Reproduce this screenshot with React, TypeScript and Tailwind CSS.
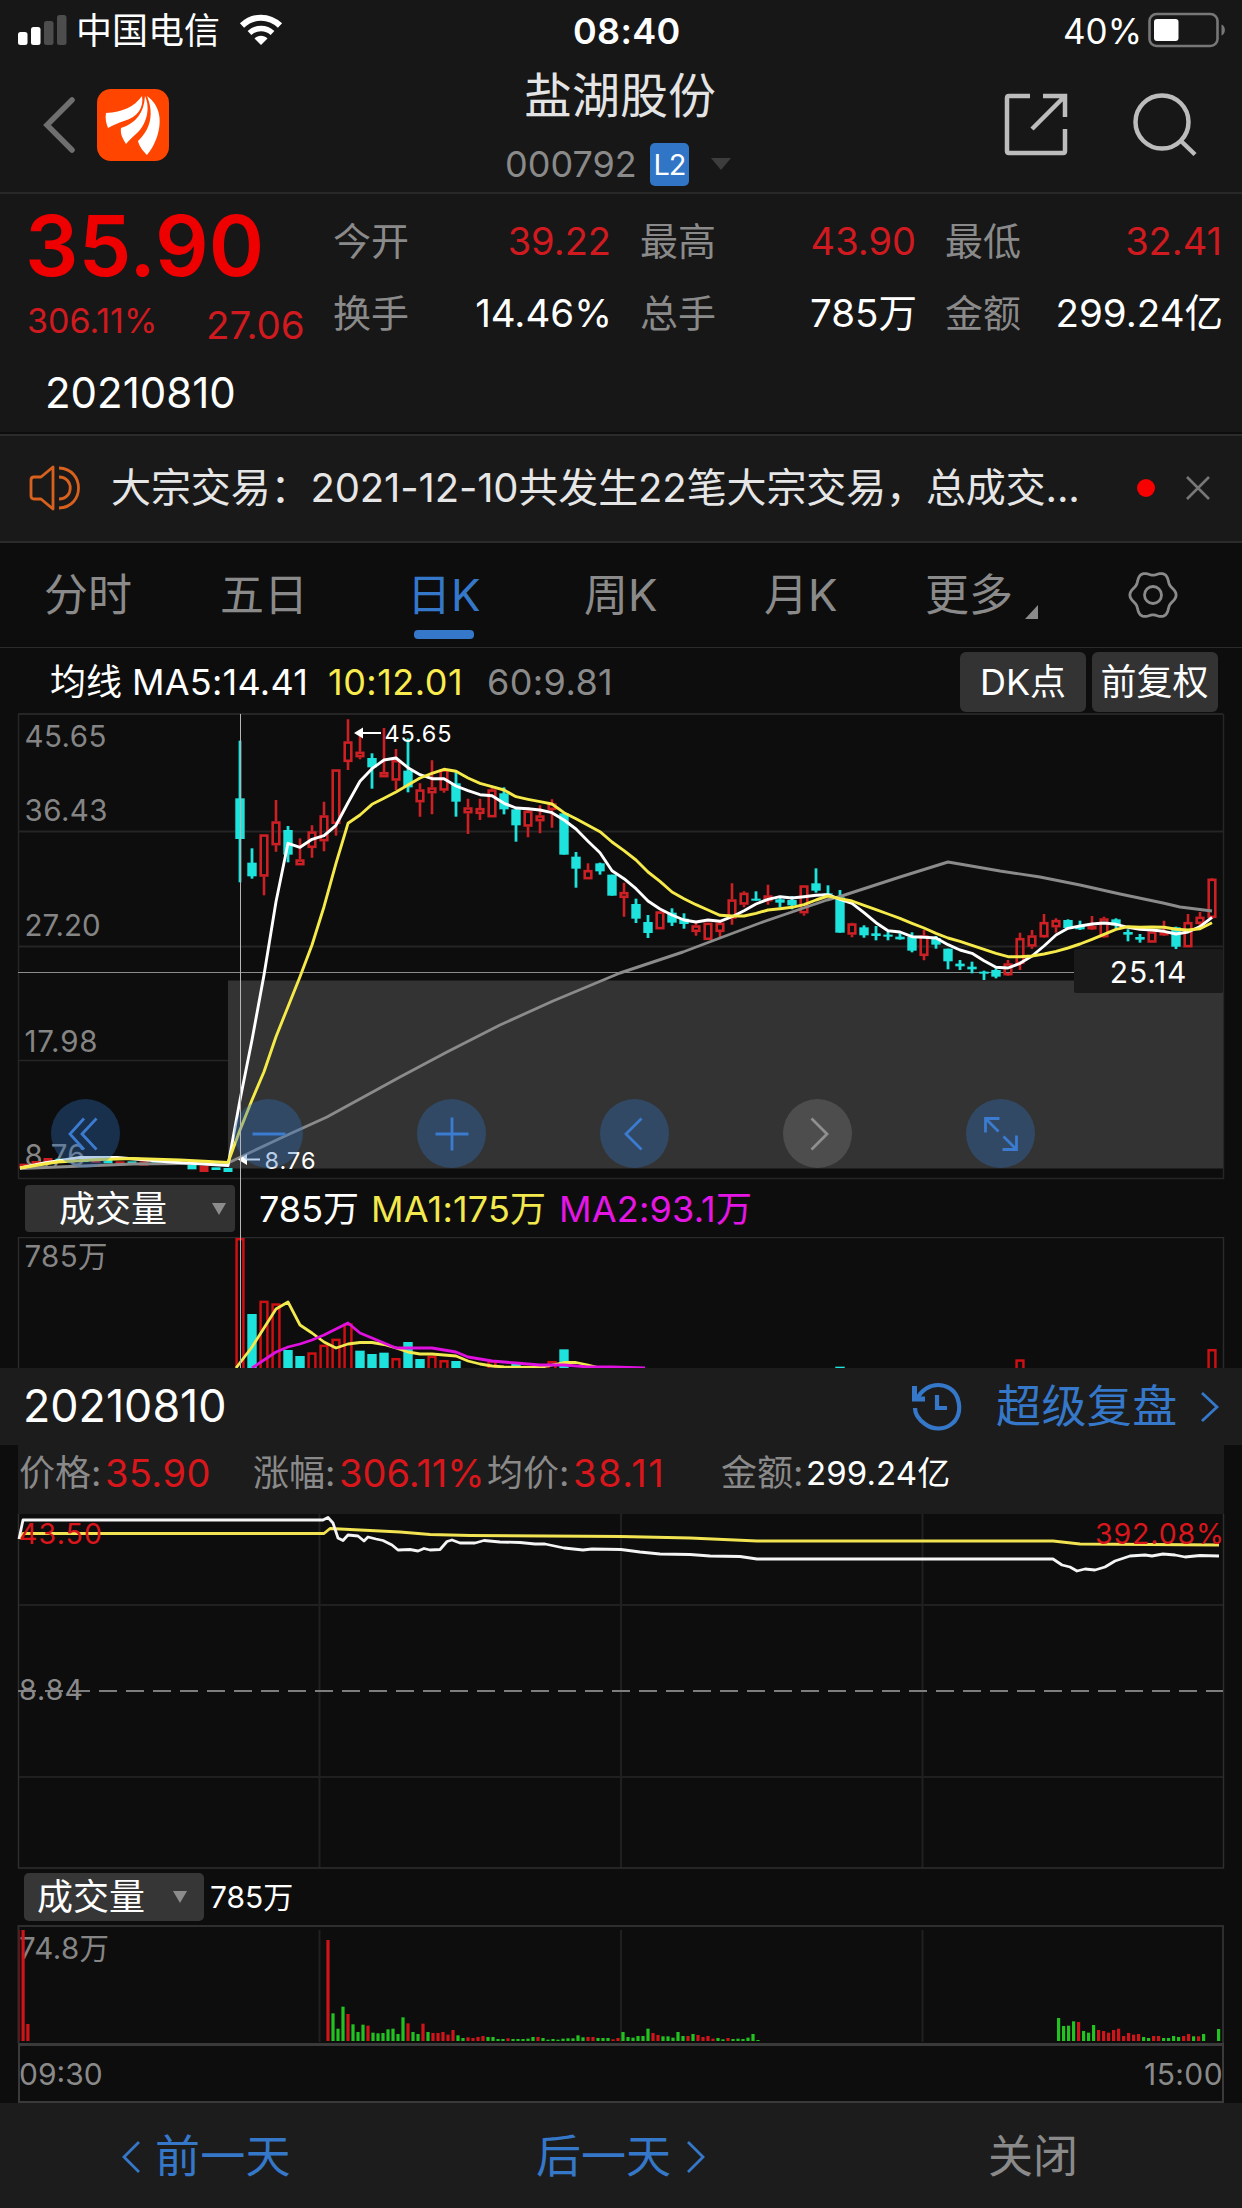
import React from "react";

type Candle = [number, number, number, number, number];
const R = 1;
const C = 0;

/* colour, high, body top, body bottom, low (thirds of a pixel below the chart origin) */
const candles: Candle[] = [
  [C, 122, 295, 417, 547], [C, 445, 488, 529, 536], [R, 403, 403, 530, 586], [R, 300, 364, 436, 455],
  [C, 378, 390, 464, 487], [R, 415, 478, 496, 496], [R, 376, 394, 444, 473], [R, 305, 346, 424, 454],
  [R, 208, 208, 372, 407], [R, 58, 124, 186, 210], [R, 107, 155, 172, 178], [C, 160, 174, 202, 266],
  [R, 84, 216, 232, 232], [R, 147, 180, 242, 270], [C, 115, 212, 262, 277], [R, 250, 268, 307, 350],
  [R, 181, 262, 280, 343], [R, 208, 208, 272, 278], [C, 212, 250, 305, 350], [R, 296, 322, 340, 402],
  [R, 296, 324, 342, 360], [R, 262, 268, 352, 352], [C, 262, 280, 328, 343], [C, 322, 328, 376, 425],
  [R, 322, 332, 380, 412], [R, 316, 346, 364, 400], [R, 298, 310, 330, 383], [C, 340, 340, 464, 464],
  [C, 456, 470, 506, 563], [R, 490, 510, 538, 538], [C, 488, 490, 514, 524], [C, 524, 524, 587, 587],
  [R, 548, 576, 594, 650], [C, 596, 612, 656, 669], [C, 645, 666, 699, 714], [R, 634, 634, 688, 688],
  [C, 625, 638, 668, 678], [C, 640, 656, 672, 686], [R, 668, 676, 696, 707], [R, 668, 668, 720, 720],
  [R, 660, 668, 696, 714], [R, 550, 598, 656, 674], [R, 574, 578, 614, 622], [C, 574, 596, 602, 602],
  [R, 554, 586, 604, 614], [C, 590, 598, 608, 622], [C, 588, 600, 616, 628], [R, 556, 556, 640, 647],
  [C, 505, 550, 572, 578], [C, 556, 580, 584, 586], [C, 570, 592, 698, 698], [R, 668, 670, 704, 712],
  [C, 676, 682, 706, 713], [C, 678, 700, 708, 721], [C, 696, 704, 710, 721], [C, 700, 710, 718, 719],
  [C, 697, 710, 752, 757], [R, 690, 706, 768, 781], [C, 708, 714, 734, 746], [C, 746, 746, 784, 808],
  [C, 780, 791, 799, 810], [C, 785, 800, 808, 820], [C, 812, 815, 821, 840], [C, 805, 810, 830, 835],
  [R, 780, 790, 826, 828], [R, 698, 714, 792, 810], [R, 690, 706, 740, 746], [R, 642, 666, 712, 713],
  [R, 655, 660, 682, 698], [C, 658, 660, 684, 686], [C, 662, 678, 688, 690], [R, 648, 678, 688, 690],
  [R, 650, 655, 712, 713], [C, 655, 658, 676, 684], [C, 688, 696, 704, 724], [C, 702, 711, 719, 728],
  [R, 694, 694, 728, 728], [R, 662, 696, 706, 708], [C, 680, 682, 740, 748], [R, 642, 666, 742, 742],
  [R, 636, 650, 672, 676], [R, 534, 536, 654, 656],
];

/* flat sessions before the gap: colour, top, bottom */
const early: [number, number, number][] = [
  [R, 1391, 1407], [R, 1383, 1396], [R, 1374, 1386], [C, 1376, 1386], [R, 1376, 1386], [C, 1376, 1386],
  [R, 1380, 1388], [C, 1380, 1390], [R, 1384, 1397], [C, 1384, 1392], [R, 1384, 1397], [C, 1384, 1391],
  [R, 1384, 1392], [C, 1386, 1392], [C, 1394, 1408], [R, 1397, 1416], [C, 1402, 1410], [C, 1404, 1416],
];

const ma5 = [
  1200, 1020, 825, 605, 430, 442, 418, 407, 376, 308, 244, 206, 180, 174, 203, 224, 236, 236, 258, 272, 284, 287,
  310, 324, 326, 330, 338, 360, 387, 424, 458, 512, 536, 566, 603, 627, 645, 660, 666, 660, 664, 650, 632, 612, 598,
  590, 594, 590, 586, 584, 598, 610, 638, 668, 692, 696, 710, 712, 714, 734, 750, 760, 782, 802, 804, 790, 768, 738,
  705, 685, 678, 672, 669, 673, 682, 688, 690, 694, 702, 696, 680, 652,
];
const ma10 = [
  1290, 1200, 1115, 1010, 920, 830, 735, 620, 490, 370, 345, 313, 295, 276, 255, 234, 220, 208, 214, 234, 250, 260,
  270, 290, 298, 305, 312, 338, 356, 376, 395, 426, 452, 480, 516, 544, 576, 596, 614, 630, 646, 648, 648, 640, 630,
  626, 622, 614, 600, 588, 596, 603, 616, 629, 642, 655, 670, 684, 700, 714, 724, 736, 748, 760, 770, 770, 768, 762,
  754, 744, 732, 718, 703, 688, 680, 682, 681, 682, 688, 690, 686, 668,
];
const cx = (i: number) => 240 + i * 12;
const cy = (v: number) => 700 + v / 3;
const line = (head: string, vals: number[]) => head + " " + vals.map((v, i) => `${cx(i)},${cy(v).toFixed(1)}`).join(" ");

const volBars: [number, number, number][] = [
  [0, R, 174], [1, C, 402], [2, R, 362], [3, R, 370], [4, C, 510], [5, C, 528], [6, R, 517], [7, R, 494], [8, R, 476],
  [9, R, 430], [10, C, 512], [11, C, 522], [12, C, 518], [13, R, 534], [14, C, 486], [15, C, 537], [16, R, 527],
  [17, R, 540], [18, C, 543], [21, R, 541], [23, C, 550], [26, R, 543], [27, C, 508], [50, C, 560], [65, R, 538],
  [81, R, 507],
];

const ticksA =
  "r240,g460,g506,g440,r462,g493,g516,g494,r497,g518,g520,g519,g508,g506,g522,g472,r490,g516,g522,r491,g516,r519,r519,r516,r524,r510,g526,g534,r532,r534,r531,r528,g531,g531,g537,g537,r535,g537,g537,g537,g536,g531,r531,g534,g539,g537,g539,g536,g535,g535,g526,g532,r531,r531,g534,g534,g534,r538,r534,g516,g531,g533,g528,g528,g506,r519,r525,g529,g529,g533,g516,g528,r528,g522,r525,r531,r528,r536,g534,g538,r534,g537,g536,g537,g533,g522,g540";
const ticksB =
  "g474,g498,g497,g484,r486,g513,g518,g495,r510,r513,r518,r510,r506,r528,r519,r524,r522,g531,g534,r528,r528,g534,g534,g528,g531,r528,r522,g529,r529,g522";

function Ticks({ data, x }: { data: string; x: number }) {
  return (
    <>
      {data.split(",").map((t, i) => {
        const top = 1860 + Number(t.slice(1)) / 3;
        return (
          <rect key={i} x={x + i * 5 - 1.6} y={top} width={3.2} height={2041 - top} fill={t[0] === "r" ? "#d0151a" : "#22c321"} />
        );
      })}
    </>
  );
}

function StatusBar() {
  return (
    <div className="flex h-[60px] items-center text-white">
      <svg className="ml-[18px] h-[30px] w-[49px]" viewBox="0 0 49 30">
        <rect x="0" y="17" width="9.5" height="13" rx="2.5" fill="#fff" />
        <rect x="13" y="12" width="9.5" height="18" rx="2.5" fill="#fff" />
        <rect x="26" y="6" width="9.5" height="24" rx="2.5" fill="#4d4d4d" />
        <rect x="39" y="0" width="9.5" height="30" rx="2.5" fill="#4d4d4d" />
      </svg>
      <span className="ml-[9px] mt-[2px] w-[162px] text-[36px]">中国电信</span>
      <svg className="ml-[1px] h-[32px] w-[44px]" viewBox="0 0 44 32" fill="none">
        <path d="M3 11.5C14 1 30 1 41 11.5" stroke="#fff" strokeWidth="6" />
        <path d="M10.5 19C17 13 27 13 33.500 19" stroke="#fff" strokeWidth="5.500" />
        <path d="M15.500 24.500C19 20.800 25 20.800 28.500 24.500L22 31Z" fill="#fff" />
      </svg>
      <span className="ml-[290px] mt-[2px] w-[490px] text-[36px] font-semibold tracking-[0.3px]">08:40</span>
      <span className="mt-[2px] w-[84px] text-[35px]">40%</span>
      <svg className="h-[36px] w-[80px]" viewBox="0 0 80 36">
        <rect x="2.5" y="2" width="68" height="32" rx="7" fill="none" stroke="#777" strokeWidth="2.600" />
        <rect x="7" y="7" width="24.500" height="22" rx="3" fill="#fff" />
        <path d="M74.500 12.500C79 14 79 22 74.500 23.500Z" fill="#777" />
      </svg>
    </div>
  );
}

function NavBar() {
  return (
    <div className="flex h-[132px]">
      <svg className="ml-[42px] mt-[37px] h-[56px] w-[34px]" viewBox="0 0 34 56">
        <path d="M30 3L5 28L30 53" fill="none" stroke="#6f6f6f" strokeWidth="5.500" strokeLinecap="round" />
      </svg>
      <svg className="ml-[21px] mt-[29px] h-[72px] w-[72px]" viewBox="0 0 72 72">
        <rect width="72" height="72" rx="14" fill="#ff4500" />
        <path d="M9 24C26 23 37 18 45 7C47 18 41 28 27 32C21 34 16 36 11 39C9 34 8 29 9 24Z" fill="#fff" />
        <path d="M48 7C54 20 49 36 40 44C36 48 32 51 29 55C26 50 23 45 24 39C39 34 47 24 48 7Z" fill="#fff" />
        <path d="M50 7C64 17 65 33 60 48C57 56 54 61 50 66C46 62 42 57 41 52C54 40 57 24 50 7Z" fill="#fff" />
      </svg>
      <div className="ml-[257px] flex w-[300px] flex-col pl-[98px]">
        <div className="mt-[12px] flex h-[48px] items-center text-[48px] text-[#e4e4e4]"><span className="whitespace-nowrap">盐湖股份</span></div>
      </div>
      <div className="-ml-[221px] mt-[82px] flex h-[44px] w-[400px] items-center">
        <span className="w-[145px] text-[36px] text-[#8a8a8a]">000792</span>
        <span className="flex h-[43px] w-[39px] items-center justify-center rounded-[5px] bg-[#3075c6] text-[29px] tracking-[-1px] text-white"><span>L2</span></span>
        <svg className="ml-[22px] h-[12px] w-[20px]" viewBox="0 0 20 12"><path d="M0 0H20L10 12Z" fill="#3d3d3d" /></svg>
      </div>
      <svg className="ml-[98px] mt-[32px] h-[66px] w-[66px]" viewBox="0 0 66 66" fill="none" stroke="#bcbcbc" strokeWidth="4.500">
        <path d="M27 4H6Q4 4 4 6V59Q4 61 6 61H60Q62 61 62 59V37" />
        <path d="M40 4H62V25M62 4L29 37" />
      </svg>
      <svg className="ml-[62px] mt-[32px] h-[66px] w-[68px]" viewBox="0 0 68 66" fill="none" stroke="#bcbcbc" strokeWidth="4.500">
        <circle cx="31" cy="30" r="26.500" />
        <path d="M50 49L64 62.500" />
      </svg>
    </div>
  );
}

function Stat({ label, value, red }: { label: string; value: string; red?: boolean }) {
  return (
    <div className="flex items-center justify-between">
      <span className="text-[38px] text-[#8a8a8a]">{label}</span>
      <span className={red ? "text-[38px] text-[#d01a1f]" : "-mr-px text-[38.5px] text-white"}>{value}</span>
    </div>
  );
}

function Quote() {
  return (
    <div className="flex h-[240px] border-t-2 border-[#282828]">
      <div className="w-[333px] pl-[25px]">
        <div className="mt-[9px] flex h-[86px] items-center text-[84px] font-semibold text-[#ee0000]"><span>35.90</span></div>
        <div className="mt-[10px] flex h-[46px] items-center pl-[2px] text-[#d01a1f]">
          <span className="relative -top-px w-[179px] text-[34px]">306.11%</span>
          <span className="relative top-[3px] text-[38.5px]">27.06</span>
        </div>
        <div className="mt-[26px] flex h-[44px] items-center pl-[20px] text-[42px] text-white"><span>20210810</span></div>
      </div>
      <div className="mt-[11px] grid h-[144px] w-[890px] grid-cols-[278px_276px_277px] grid-rows-2 gap-x-[29px]">
        <Stat label="今开" value="39.22" red />
        <Stat label="最高" value="43.90" red />
        <Stat label="最低" value="32.41" red />
        <Stat label="换手" value="14.46%" />
        <Stat label="总手" value="785万" />
        <Stat label="金额" value="299.24亿" />
      </div>
    </div>
  );
}

function News() {
  return (
    <div className="flex h-[109px] items-center border-b-2 border-t-2 border-[#2b2b2b] bg-[#191919] pb-[2px]">
      <svg className="ml-[28px] h-[46px] w-[54px]" viewBox="0 0 54 46" fill="none" stroke="#d8611d" strokeWidth="2.800">
        <path d="M25 2V44L13 34H6Q3 34 3 31V15Q3 12 6 12H13Z" strokeLinejoin="round" />
        <path d="M31 12C46 12 46 34 31 34M31 3C57 4 57 42 31 43" />
      </svg>
      <span className="ml-[29px] w-[1026px] whitespace-nowrap text-[40px] tracking-[-0.12px] text-[#e6e6e6]">大宗交易：2021-12-10共发生22笔大宗交易，总成交...</span>
      <span className="size-[18px] rounded-full bg-[#f80000]" />
      <svg className="ml-[31px] h-[24px] w-[24px]" viewBox="0 0 24 24"><path d="M1 1L23 23M23 1L1 23" stroke="#777" strokeWidth="2.600" /></svg>
    </div>
  );
}

const gear = Array.from({ length: 120 }, (_, i) => {
  const t = (i * Math.PI) / 60;
  const r = 21.200 + 1.900 * Math.cos(6 * t);
  return `${(r * Math.cos(t)).toFixed(2)},${(r * 1.03 * Math.sin(t)).toFixed(2)}`;
}).join(" ");

function Tabs() {
  return (
    <div className="flex h-[105px] items-center border-b border-[#2b2b2b] text-[44px] text-[#8a8a8a]">
      <span className="ml-[44px] w-[176px]">分时</span>
      <span className="w-[187px]">五日</span>
      <span className="relative flex h-full w-[177px] items-center text-[#3577c8]">
        <span>日K</span>
        <span className="absolute bottom-[8px] left-[7px] h-[9px] w-[60px] rounded-[4px] bg-[#3577c8]" />
      </span>
      <span className="w-[180px]">周K</span>
      <span className="w-[161px]">月K</span>
      <span className="w-[100px]">更多</span>
      <svg className="mt-[33px] h-[14px] w-[13px]" viewBox="0 0 13 14"><path d="M13 0V14H0Z" fill="#8a8a8a" /></svg>
      <svg className="ml-[90px] h-[48px] w-[50px]" viewBox="-25 -24 50 48" fill="none" stroke="#8a8a8a" strokeWidth="2.800">
        <polygon points={gear} />
        <circle r="8.500" />
      </svg>
    </div>
  );
}

function MaRow() {
  return (
    <div className="flex h-[65px] items-start text-[36px] text-white">
      <div className="flex h-[67px] w-full items-center">
        <span className="ml-[50px] w-[82px]">均线</span>
        <span className="w-[196px] tracking-[0.25px]">MA5:14.41</span>
        <span className="w-[159px] tracking-[0.5px] text-[#f9ec4f]">10:12.01</span>
        <span className="w-[473px] tracking-[0.4px] text-[#8a8a8a]">60:9.81</span>
        <span className="flex h-[60px] w-[126px] items-center justify-center rounded-[6px] bg-[#333]"><span>DK点</span></span>
        <span className="ml-[6px] flex h-[60px] w-[126px] items-center justify-center rounded-[6px] bg-[#333] pr-px"><span>前复权</span></span>
      </div>
    </div>
  );
}

function ChartButton({ gray, children }: { gray?: boolean; children: React.ReactNode }) {
  return (
    <button className={gray ? "flex size-[69px] items-center justify-center rounded-full bg-[#8a8a8a]/30 text-[#8f8f8f]" : "flex size-[69px] items-center justify-center rounded-full bg-[#2d74c4]/35 text-[#3b7bd0]"}>
      <svg viewBox="-20 -20 40 40" className="size-[40px]" fill="none" stroke="currentColor" strokeWidth="2.800">{children}</svg>
    </button>
  );
}

function KChart() {
  const labels: [string, number, number][] = [["45.65", 747, 82], ["36.43", 821, 83], ["27.20", 936, 76], ["17.98", 1051.5, 73], ["8.76", 1166, 61]];
  return (
    <div className="relative h-[467px]">
      <svg className="block h-[467px] w-[1242px]" viewBox="0 713 1242 467" fill="none" fontFamily="Inter">
        <path d="M18 714H1223M18 831.500H1223M18 946.500H1223" stroke="#252525" strokeWidth="2" />
        <path d="M18 1060.500H228M18.500 714V1178.500H1223.500V714" stroke="#262626" strokeWidth="1.500" />
        <rect x="228" y="980.500" width="995" height="188" fill="#333" />
        <path d="M18 972.500H1074" stroke="#8c8c8c" strokeWidth="1" />
        {labels.map(([t, y, w]) => (
          <text key={t} x="24.500" y={y} textLength={w} fontSize="29.500" fill="#858585">{t}</text>
        ))}
        {early.map(([c, a, b], i) => (
          <rect key={i} x={cx(i - 18) - 4.5} y={cy(a)} width="9" height={(b - a) / 3} fill={c ? "#cd1f22" : "#1ee3dc"} />
        ))}
        {candles.map(([c, h, a, b, l], i) => {
          const x = cx(i);
          return c ? (
            <g key={i} stroke="#cc2025" strokeWidth="2.600">
              <path d={`M${x} ${cy(h)}V${cy(a)}M${x} ${cy(b)}V${cy(l)}`} />
              <rect x={x - 3.3} y={cy(a) + 1.2} width="6.600" height={Math.max((b - a) / 3 - 2.4, 1)} />
            </g>
          ) : (
            <g key={i} fill="#1ee3dc">
              <rect x={x - 1.4} y={cy(h)} width="2.800" height={(l - h) / 3} />
              <rect x={x - 4.7} y={cy(a)} width="9.400" height={(b - a) / 3} />
            </g>
          );
        })}
        <g strokeWidth="2.900" strokeLinejoin="round">
          <path d="M20 1168.500L133 1164L228 1163L283 1137L327 1117L400 1077L447 1052L500 1025L553 1001L620 973L683 952L720 938L760 923L827 900L840 896.500L900 877L948 862L977 867L1000 871L1040 877L1080 885L1120 894L1163 903L1180 907L1212 911" stroke="#8b8b8b" />
          <polyline points={line("20,1168 44,1163 80,1157.500 117,1157.500 170,1162 228,1165.500", ma5)} stroke="#fff" />
          <polyline points={line("20,1168 57,1162 100,1159.500 133,1158.500 180,1160 228,1162.500", ma10)} stroke="#f5ea4a" />
        </g>
        <path d="M361 733H381M247 1159.500H260" stroke="#fff" strokeWidth="2.200" />
        <path d="M354 733L363 727.500V738.500ZM238 1159.500L247 1154V1165Z" fill="#fff" />
        <text x="384.500" y="741.500" textLength="67" fontSize="23.500" fill="#fff">45.65</text>
        <text x="264.500" y="1168.500" textLength="51" fontSize="23.500" fill="#fff">8.76</text>
      </svg>
      <div className="absolute left-[1074px] top-[236px] flex h-[44px] w-[149px] items-center justify-center rounded-[2px] bg-[#1a1a1a] pt-[2px] text-[30px] tracking-[0.8px] text-white"><span>25.14</span></div>
      <div className="absolute left-[51px] top-[386px] flex gap-[114px]">
        <ChartButton><path d="M-2 -15.500L-16 0L-2 15.500M10.500 -15.500L-4 0L10.500 15.500" /></ChartButton>
        <ChartButton><path d="M-16.500 0H16.500" /></ChartButton>
        <ChartButton><path d="M-16.500 0H16.500M0 -16.500V16.500" /></ChartButton>
        <ChartButton><path d="M6.500 -15.500L-9 0L6.500 15.500" /></ChartButton>
        <ChartButton gray><path d="M-6.500 -15.500L9 0L-6.500 15.500" /></ChartButton>
        <ChartButton><path d="M-1.500 -15.500H-15.500V-1.500M-15.500 -15.500L-2.500 -2.500M1.500 15.500H15.500V1.500M15.500 15.500L2.500 2.500" /></ChartButton>
      </div>
    </div>
  );
}

function Caret() {
  return <svg className="h-[12px] w-[14px]" viewBox="0 0 14 12"><path d="M0 0H14L7 12Z" fill="#8c8c8c" /></svg>;
}

function VolumeRow() {
  return (
    <div className="flex h-[57px] items-center text-[36px] text-white">
      <span className="ml-[25px] flex h-[47px] w-[210px] items-center justify-between rounded-[4px] bg-[#323232] pl-[34px] pr-[9px]"><span>成交量</span><Caret /></span>
      <span className="ml-[24px] w-[112px]">785万</span>
      <span className="w-[188px] tracking-[0.2px] text-[#f2e94e]">MA1:175万</span>
      <span className="tracking-[0.2px] text-[#e516e5]">MA2:93.1万</span>
    </div>
  );
}

function VolumeChart() {
  return (
    <svg className="block h-[131px] w-[1242px]" viewBox="0 1237 1242 131" fill="none" fontFamily="Inter, 'Noto Sans CJK SC', sans-serif">
      <path d="M18.500 1368V1237.500H1223.500V1368" stroke="#2b2b2b" strokeWidth="1.500" />
      <text x="24.500" y="1267" textLength="83" fontSize="29.500" fill="#858585">785万</text>
      {volBars.map(([i, c, v]) => {
        const y = 1180 + v / 3;
        return c ? (
          <rect key={i} x={cx(i) - 3.4} y={y + 1.200} width="6.800" height="200" stroke="#cc1013" strokeWidth="2.500" />
        ) : (
          <rect key={i} x={cx(i) - 4.7} y={y} width="9.400" height="200" fill="#1ee3dc" />
        );
      })}
      <g strokeWidth="2.800" strokeLinejoin="round">
        <polyline points="236,1368 252,1347 264,1328 276,1309 288,1302 300,1325 312,1333 324,1342 336,1348 348,1344 360,1342.500 372,1342.500 384,1344.500 396,1348 408,1352 420,1354 432,1354 444,1355 456,1356 468,1361 480,1364 492,1366 504,1367 540,1367.500 552,1365 564,1362.500 576,1362.500 588,1365 600,1368" stroke="#f2e94e" />
        <polyline points="252,1368 264,1360 276,1352 288,1347 300,1344 312,1340 324,1335 336,1329 348,1323 360,1333 372,1338 384,1343 396,1348 432,1348 444,1350 456,1352 468,1357 480,1359 492,1361 516,1363 540,1365 564,1365 588,1367 612,1367 645,1368" stroke="#e010e0" />
      </g>
    </svg>
  );
}

function ReplayHead() {
  return (
    <div className="flex h-[77px] items-center bg-[#1c1c1c] text-[#3577c8]">
      <span className="ml-[23px] w-[887px] text-[44.8px] text-white">20210810</span>
      <svg className="ml-px h-[52px] w-[52px]" viewBox="0 0 52 52" fill="none" stroke="currentColor" strokeWidth="4.200">
        <path d="M6 18C15 -1 40 0 46.500 17C55 42 30 55 14 43C7 38 4 33 4 27" />
        <path d="M3.500 5V18H14" strokeWidth="5" />
        <path d="M26 14V27H36" />
      </svg>
      <span className="ml-[33px] w-[204px] text-[45px] tracking-[0.4px]">超级复盘</span>
      <svg className="h-[32px] w-[20px]" viewBox="0 0 20 32"><path d="M2 2L17 16L2 30" fill="none" stroke="currentColor" strokeWidth="2.800" /></svg>
    </div>
  );
}

function InfoRow() {
  return (
    <div className="mx-[18px] flex h-[69px] items-center bg-[#1c1c1c] pb-[13px] text-[36px] text-[#8a8a8a]">
      <span className="ml-[1px] w-[86px]">价格:</span>
      <span className="w-[148px] text-[38px] tracking-[0.4px] text-[#d8161b]">35.90</span>
      <span className="w-[86px]">涨幅:</span>
      <span className="w-[148px] text-[38px] text-[#d8161b]">306.11%</span>
      <span className="w-[86px]">均价:</span>
      <span className="w-[148px] text-[38px] tracking-[1.5px] text-[#d8161b]">38.11</span>
      <span className="w-[85px]">金额:</span>
      <span className="text-[33px] tracking-[0.1px] text-white">299.24亿</span>
    </div>
  );
}

function MinuteChart() {
  return (
    <svg className="block h-[355px] w-[1242px]" viewBox="0 1514 1242 355" fill="none" fontFamily="Inter">
      <path d="M319.500 1514V1868M621 1514V1868M922.500 1514V1868M18 1605H1223M18 1777H1223" stroke="#202020" strokeWidth="2" />
      <path d="M18.500 1514V1868H1223.500V1514" stroke="#2e2e2e" strokeWidth="1.500" />
      <path d="M18 1691H1223" stroke="#7d7d7d" strokeWidth="2" strokeDasharray="18 9" />
      <g strokeWidth="2.800" strokeLinejoin="round">
        <path d="M20 1539L23 1533.500H324L330 1528.500L340 1529L400 1532L430 1534.500L470 1535.500L621 1536.500L690 1538L757 1541H1053L1080 1544L1219 1545" stroke="#f2e352" />
        <path d="M19 1539L23 1520H323L328 1517.500L333 1523L338 1538L343 1540.500L348 1535L358 1536L364 1541L368 1537L376 1539L383 1540.500L392 1545L398 1550L410 1549.500L418 1551L424 1548.500L430 1550L440 1549.500L447 1541.500L452 1540L460 1543L475 1543L484 1540.500L500 1542L520 1542.500L535 1544L545 1544L564 1548L583 1550L592 1549L621 1549.500L640 1552L660 1554L690 1554.500L710 1556L740 1556.500L757 1559H1053L1062 1565L1070 1567L1077 1571L1085 1569L1095 1570L1105 1567L1115 1561L1130 1556L1145 1555L1152 1556L1163 1554L1175 1555L1185 1557L1200 1555.500L1219 1556" stroke="#f5f5f5" />
      </g>
      <text x="19" y="1543.500" textLength="83" fontSize="28.500" fill="#d8161b">43.50</text>
      <text x="1095" y="1543.500" textLength="129" fontSize="28.500" fill="#d8161b">392.08%</text>
      <text x="19" y="1700" textLength="64" fontSize="28.500" fill="#8a8a8a">8.84</text>
    </svg>
  );
}

function MinuteVolume() {
  return (
    <>
      <div className="flex h-[56px] items-center text-[36px] text-white">
        <span className="ml-[24px] flex h-[48px] w-[180px] items-center justify-between rounded-[5px] bg-[#363636] pl-[13px] pr-[17px]"><span>成交量</span><Caret /></span>
        <span className="ml-[6px] text-[30px]">785万</span>
      </div>
      <svg className="block h-[118px] w-[1242px]" viewBox="0 1925 1242 118" fill="none" fontFamily="Inter, 'Noto Sans CJK SC', sans-serif">
        <path d="M319.500 1930V2042M621 1930V2042M922.500 1930V2042" stroke="#202020" strokeWidth="2" />
        <path d="M18.500 2043V1926H1223V2043" stroke="#2e2e2e" strokeWidth="2" />
        <text x="19" y="1959" textLength="90" fontSize="29.500" fill="#858585">74.8万</text>
        <path d="M19.500 1930V2041" stroke="#6b1214" strokeWidth="1.500" />
        <rect x="21.500" y="1930" width="3.200" height="111" fill="#d0151a" />
        <rect x="26.300" y="2024" width="3.200" height="17" fill="#d0151a" />
        <Ticks data={ticksA} x={328} />
        <Ticks data={ticksB} x={1058.6} />
        <rect x="1217" y="2029" width="3.200" height="12" fill="#22c321" />
      </svg>
      <div className="mx-[18px] flex h-[60px] items-center justify-between border-2 border-t-[3px] border-[#3a3a3a] text-[30px] text-[#8a8a8a]">
        <span className="-ml-px">09:30</span>
        <span className="-mr-px tracking-[0.4px]">15:00</span>
      </div>
    </>
  );
}

function Footer() {
  return (
    <div className="flex h-[105px] items-center bg-[#1c1c1c] pt-[2px] text-[45px] text-[#3577c8]">
      <svg className="ml-[121px] h-[34px] w-[20px]" viewBox="0 0 20 34"><path d="M18 2L3 17L18 32" fill="none" stroke="currentColor" strokeWidth="2.800" /></svg>
      <span className="ml-[14px] w-[381px] tracking-[0.3px]">前一天</span>
      <span className="w-[150px]">后一天</span>
      <svg className="h-[34px] w-[20px]" viewBox="0 0 20 34"><path d="M2 2L17 17L2 32" fill="none" stroke="currentColor" strokeWidth="2.800" /></svg>
      <span className="ml-[282px] text-[#8a8a8a]">关闭</span>
    </div>
  );
}

export default function App() {
  return (
    <div className="h-[2208px] w-[1242px] overflow-hidden bg-[#0d0d0d] font-['Inter','Noto_Sans_CJK_SC',sans-serif] leading-none">
      <div className="bg-[#171717]">
        <StatusBar />
        <NavBar />
        <Quote />
      </div>
      <div className="mt-[2px]">
        <News />
      </div>
      <Tabs />
      <MaRow />
      <div className="relative">
        <KChart />
        <VolumeRow />
        <VolumeChart />
        <div className="absolute bottom-0 left-[240px] top-[1px] w-px bg-[#b5b5b5]" />
      </div>
      <ReplayHead />
      <InfoRow />
      <MinuteChart />
      <MinuteVolume />
      <Footer />
    </div>
  );
}
